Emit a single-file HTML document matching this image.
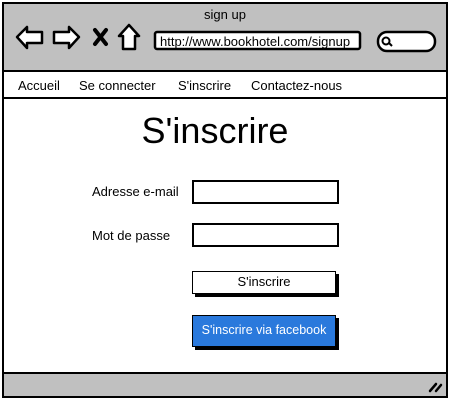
<!DOCTYPE html>
<html><head><meta charset="utf-8"><style>
*{margin:0;padding:0;box-sizing:border-box}
body{width:450px;height:400px;background:#fff;position:relative;overflow:hidden;font-family:"Liberation Sans","DejaVu Sans",sans-serif;color:#000}
.a{position:absolute}
</style></head><body>
<div class="a" style="left:2px;top:2px;width:446px;height:396px;border:2px solid #000;background:#fff"></div>
<div class="a" style="left:4px;top:4px;width:442px;height:67px;background:#c0c0c0"></div>
<div class="a" style="left:4px;top:70px;width:442px;height:2px;background:#000"></div>
<div class="a" style="left:0;top:7px;width:450px;text-align:center;font-size:13px">sign up</div>
<svg class="a" style="left:0;top:0" width="450" height="72">
<path d="M17 37 L27 27 L27 32 L42 32 L42 43 L27 43 L27 48 Z" fill="#fff" stroke="#000" stroke-width="2.5" stroke-linejoin="round"/>
<path d="M79 37 L69 27 L69 32 L54 32 L54 43 L69 43 L69 48 Z" fill="#fff" stroke="#000" stroke-width="2.5" stroke-linejoin="round"/>
<path d="M95 30 L106 44 M106 30 L95 44" stroke="#000" stroke-width="4" stroke-linecap="round"/>
<path d="M129 25 L139 36 L135 36 L135 49 L123 49 L123 36 L119 36 Z" fill="#fff" stroke="#000" stroke-width="2.5" stroke-linejoin="round"/>
<rect x="155" y="32" width="205" height="17" rx="2" fill="#fff" stroke="#000" stroke-width="2.5"/>
<rect x="378" y="32" width="57" height="19" rx="9" fill="#fff" stroke="#000" stroke-width="2.5"/>
<circle cx="386" cy="41" r="3.5" fill="none" stroke="#000" stroke-width="2"/>
<path d="M389 43 L392 46" stroke="#000" stroke-width="2"/>
</svg>
<div class="a" style="left:160px;top:34px;font-size:13px;white-space:nowrap">http://www.bookhotel.com/signup</div>
<div class="a" style="left:4px;top:72px;width:442px;height:27px;border-bottom:2px solid #000;background:#fff"></div>
<div class="a" style="left:18px;top:78px;font-size:13px;white-space:nowrap">Accueil</div>
<div class="a" style="left:79px;top:78px;font-size:13px;white-space:nowrap">Se connecter</div>
<div class="a" style="left:178px;top:78px;font-size:13px;white-space:nowrap">S'inscrire</div>
<div class="a" style="left:251px;top:78px;font-size:13px;white-space:nowrap">Contactez-nous</div>
<div class="a" style="left:0;top:110px;width:430px;text-align:center;font-size:36px;line-height:42px">S'inscrire</div>
<div class="a" style="left:92px;top:184px;font-size:13px">Adresse e-mail</div>
<div class="a" style="left:92px;top:228px;font-size:13px">Mot de passe</div>
<div class="a" style="left:192px;top:180px;width:147px;height:24px;border:2px solid #000;background:#fff"></div>
<div class="a" style="left:192px;top:223px;width:147px;height:24px;border:2px solid #000;background:#fff"></div>
<div class="a" style="left:192px;top:271px;width:144px;height:23px;border:1.5px solid #000;box-shadow:3px 3px 0 #000;background:#fff;text-align:center;font-size:13px;line-height:20px">S'inscrire</div>
<div class="a" style="left:192px;top:315px;width:144px;height:32px;border:1.5px solid #000;box-shadow:3px 3px 0 #000;background:#2a79dc;color:#fff;text-align:center;font-size:12.5px;line-height:29px">S'inscrire via facebook</div>
<div class="a" style="left:4px;top:372px;width:442px;height:24px;background:#c0c0c0;border-top:2px solid #000"></div>
<svg class="a" style="left:428px;top:380px" width="16" height="14"><path d="M2 11 L8 4 M8 11 L13 5" stroke="#000" stroke-width="2.5" stroke-linecap="round"/></svg>
</body></html>
